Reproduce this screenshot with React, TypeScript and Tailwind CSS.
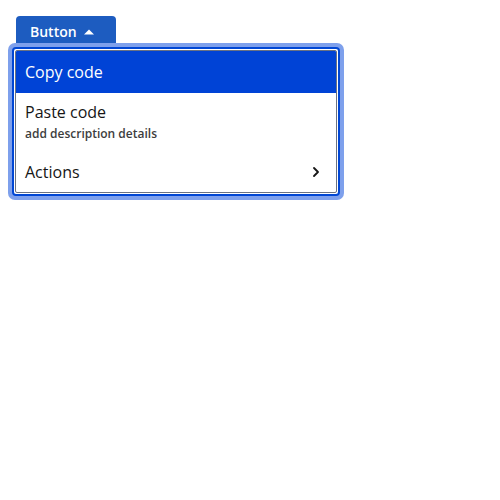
import { ChevronRight } from "lucide-react"

export default function App() {
  return (
    <div className="min-h-screen bg-white p-4 font-['Open_Sans',sans-serif]">
      <div className="relative inline-block">
        <button className="flex h-8 w-[100px] items-center gap-[7px] rounded-t-sm bg-[#1d5cc0] pl-[14px] text-sm font-semibold text-white">
          Button
          <svg width="10" height="6" viewBox="0 0 10 6" className="mt-[-1px]">
            <path d="M0 5.5 L5 0.5 L10 5.5 Z" fill="white" />
          </svg>
        </button>

        <div className="absolute left-[-8px] top-[27px] w-[336px] rounded-[7px] bg-[#7ea0ec] p-1">
          <div className="rounded-[4px] border-2 border-[#0046d4] bg-white p-px">
            <ul className="overflow-hidden rounded-[2px] border border-gray-500 text-base text-[#161616]">
              <li className="bg-[#0043d6] py-[9px] pl-[9px] leading-6 text-white">Copy code</li>
              <li className="pb-[10px] pl-[9px] pt-[7px]">
                <div className="leading-6">Paste code</div>
                <div className="mt-[2px] text-xs font-semibold leading-4 text-[#3d3d3d]">add description details</div>
              </li>
              <li className="flex items-center justify-between py-2 pl-[9px] pr-3 leading-6">
                Actions
                <ChevronRight size={16} strokeWidth={2.75} />
              </li>
            </ul>
          </div>
        </div>
      </div>
    </div>
  )
}
